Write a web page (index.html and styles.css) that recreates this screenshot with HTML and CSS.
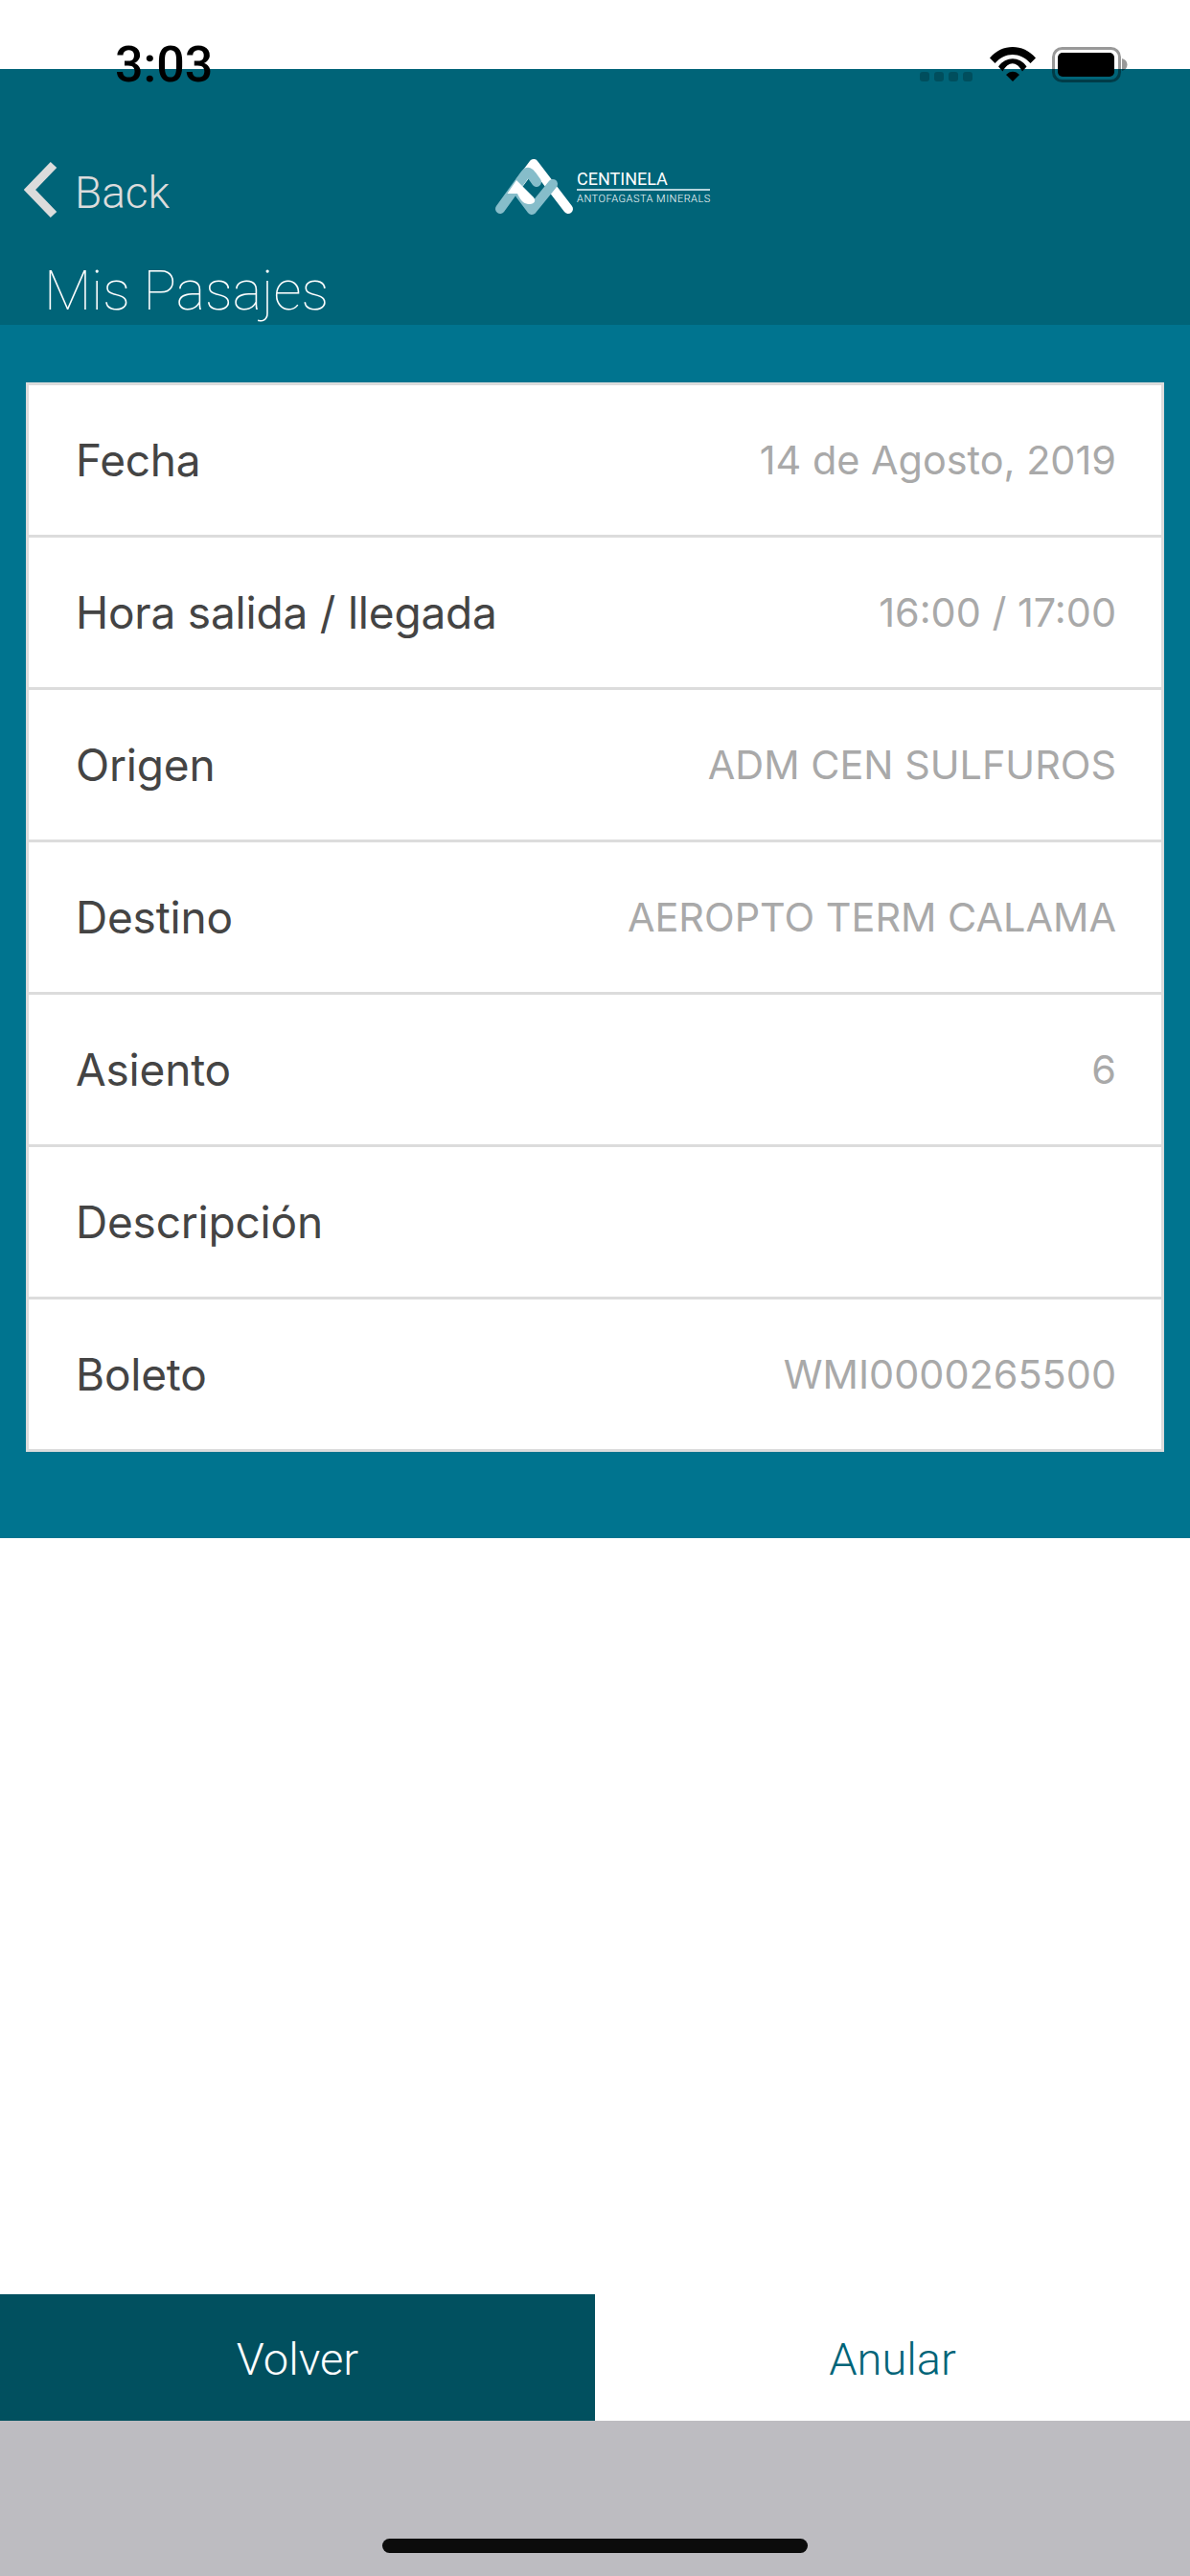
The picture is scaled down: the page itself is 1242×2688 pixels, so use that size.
FILE: index.html
```html
<!DOCTYPE html>
<html lang="es">
<head>
    <meta charset="UTF-8">
    <meta name="viewport" content="width=device-width, initial-scale=1.0">
    <title>Mis Pasajes</title>
    <link rel="stylesheet" href="styles.css">
</head>
<body>
    <div class="status-bar">
        <span class="status-time">3:03</span>
        <span class="status-dots"><i></i><i></i><i></i><i></i></span>
        <svg class="status-wifi" width="48" height="36" viewBox="0 0 48 36">
            <path d="M0 11.5C13 -3.8 34.700 -3.800 48 11.500L42.500 17C31.500 5 16 5 5.500 17Z"/>
            <path d="M9 20.500C17 9.600 31 9.600 38.500 20.500L34 25.500C28 14.500 19.500 14.500 13.500 25.500Z"/>
            <path d="M17 29C21 24.500 27 24.500 31 29L24 36Z"/>
        </svg>
        <svg class="status-battery" width="79" height="37" viewBox="0 0 79 37">
            <rect x="1.500" y="1.500" width="69" height="34" rx="9" fill="none" stroke="#000" stroke-opacity="0.4" stroke-width="3"/>
            <rect x="6" y="6" width="59" height="25" rx="5"/>
            <path d="M73 12C76.500 13 78.500 15 78.500 18.500C78.500 22 76.500 24 73 25Z" fill="#000" fill-opacity="0.4"/>
        </svg>
    </div>

    <header class="app-header">
        <div class="nav-row">
            <a class="back-link">
                <svg class="back-icon" width="36" height="60" viewBox="0 0 36 60">
                    <path d="M31 4L6 30L31 56" fill="none" stroke="#dcdcdc" stroke-width="9"/>
                </svg>
                <span class="back-text">Back</span>
            </a>
            <div class="logo">
                <svg class="logo-mark" width="96" height="72" viewBox="0 0 96 72" fill="none" stroke-linecap="round" stroke-linejoin="round" stroke-width="10">
                    <path d="M83 58L47 11L32 31" stroke="#fff"/>
                    <path d="M12 58L38 22C41 18 43 20 45 23L50 30" stroke="#86bdca"/>
                    <path d="M33 43L45 59L67 32" stroke="#86bdca"/>
                    <path d="M29 28L47 46C49.500 49 48 53 43 53C38 53 34 51 30 42L19.500 42Z" fill="#fff"/>
                </svg>
                <div class="logo-text">
                    <span class="logo-name">CENTINELA</span>
                    <span class="logo-sub">ANTOFAGASTA MINERALS</span>
                </div>
            </div>
        </div>
        <h1 class="page-title">Mis Pasajes</h1>
    </header>

    <section class="detail-panel">
        <div class="detail-card">
            <div class="detail-row"><span class="detail-label">Fecha</span><span class="detail-value">14 de Agosto, 2019</span></div>
            <div class="detail-row"><span class="detail-label">Hora salida / llegada</span><span class="detail-value">16:00 / 17:00</span></div>
            <div class="detail-row"><span class="detail-label">Origen</span><span class="detail-value">ADM CEN SULFUROS</span></div>
            <div class="detail-row"><span class="detail-label">Destino</span><span class="detail-value">AEROPTO TERM CALAMA</span></div>
            <div class="detail-row"><span class="detail-label">Asiento</span><span class="detail-value">6</span></div>
            <div class="detail-row"><span class="detail-label">Descripción</span><span class="detail-value"></span></div>
            <div class="detail-row"><span class="detail-label">Boleto</span><span class="detail-value">WMI0000265500</span></div>
        </div>
    </section>

    <div class="spacer"></div>

    <div class="actions">
        <button type="button" class="btn btn-back">Volver</button>
        <button type="button" class="btn btn-cancel">Anular</button>
    </div>

    <div class="home-area"><div class="home-bar"></div></div>
</body>
</html>
```

FILE: styles.css
```css
html, body {
    height: 100%;
}
body {
    margin: 0;
    height: 2688px;
    display: flex;
    flex-direction: column;
    padding-top: 72px;
    box-sizing: border-box;
    background-color: #fff;
    font-family: Inter, "Liberation Sans", sans-serif;
    overflow: hidden;
}

/* status bar sits over the header */
.status-bar {
    position: absolute;
    top: 0;
    left: 0;
    right: 0;
    display: flex;
    align-items: flex-start;
    gap: 18px;
    padding: 49px 65px 0 120px;
}
.status-time {
    margin-right: auto;
    margin-top: -3px;
    font-family: Roboto, sans-serif;
    font-size: 52px;
    font-weight: 500;
    line-height: 44px;
    color: #000;
}
.status-dots {
    display: flex;
    gap: 5px;
    margin-top: 26px;
}
.status-dots i {
    width: 10px;
    height: 10px;
    border-radius: 3px;
    background-color: rgba(0, 0, 0, 0.22);
}
.status-wifi {
    display: block;
}
.status-battery {
    display: block;
    margin-left: -1px;
}

.app-header {
    height: 267px;
    flex-shrink: 0;
    box-sizing: border-box;
    padding: 90px 0 0 25px;
    background-color: #006478;
    font-family: Roboto, sans-serif;
    overflow: hidden;
}
.nav-row {
    display: flex;
    align-items: center;
    height: 72px;
}
.back-link {
    display: flex;
    align-items: center;
    gap: 17px;
    width: 485px;
    font-size: 46px;
    font-weight: 300;
    color: #dcdcdc;
}
.back-icon {
    display: block;
}
.back-text {
    margin-top: 5px;
}
.logo {
    display: flex;
    align-items: center;
    margin-top: -4px;
}
.logo-mark {
    display: block;
    margin-right: -4px;
}
.logo-text {
    display: flex;
    flex-direction: column;
    width: 139px;
    margin-top: -1px;
    color: #fff;
}
.logo-name {
    font-size: 18px;
    line-height: 21px;
    border-bottom: 2px solid #b5d5dd;
}
.logo-sub {
    padding-top: 2px;
    font-size: 11px;
    font-weight: 300;
    line-height: 14px;
    letter-spacing: 0.5px;
    white-space: nowrap;
}
.page-title {
    margin: 35px 0 0 21px;
    font-size: 57.5px;
    line-height: 70px;
    font-weight: 100;
    color: #fff;
}

.detail-panel {
    flex-shrink: 0;
    height: 1266px;
    box-sizing: border-box;
    padding: 60px 27px 0;
    background-color: #00748f;
}
.detail-card {
    border: 3px solid #dcdcdc;
    background-color: #fff;
}
.detail-row {
    display: flex;
    justify-content: space-between;
    align-items: center;
    height: 156px;
    padding: 0 47px 0 49px;
    border-bottom: 3px solid #dcdcdc;
}
.detail-row:last-child {
    border-bottom: none;
}
.detail-label {
    font-size: 46px;
    letter-spacing: -0.2px;
    color: #444;
}
.detail-value {
    font-size: 41.4px;
    color: #a9a9a9;
}

.spacer {
    flex: 1;
}

.actions {
    display: flex;
    height: 132px;
    flex-shrink: 0;
}
.btn {
    flex: 1;
    padding: 3px 0 0;
    border: none;
    font-family: Roboto, sans-serif;
    font-size: 47px;
    font-weight: 300;
}
.btn-back {
    background-color: #01505f;
    color: #fff;
}
.btn-cancel {
    background-color: #fff;
    color: #006478;
}

.home-area {
    height: 162px;
    flex-shrink: 0;
    box-sizing: border-box;
    padding-top: 123px;
    background-color: #bdbcc1;
}
.home-bar {
    width: 444px;
    height: 15px;
    margin: 0 auto;
    border-radius: 8px;
    background-color: #0c0c0c;
}
```
